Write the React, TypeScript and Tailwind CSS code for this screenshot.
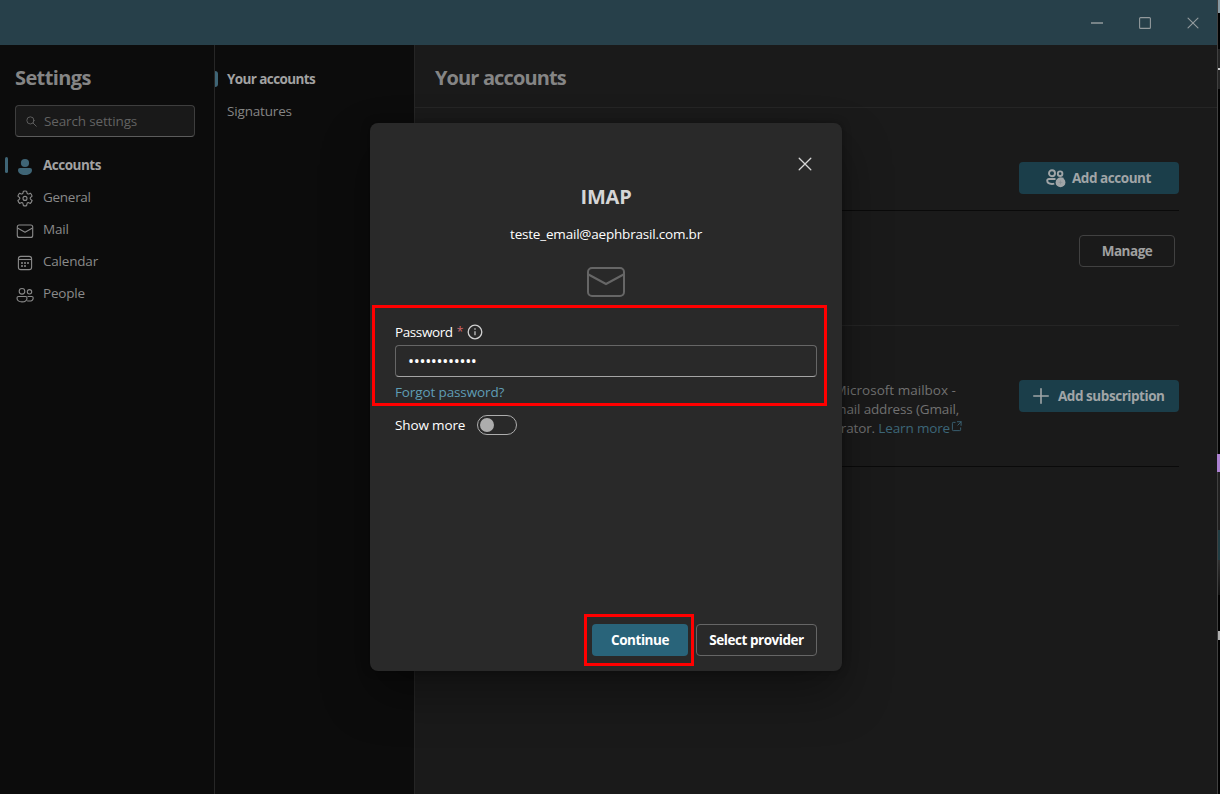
import React from 'react';

type IconProps = { className?: string };

function SearchIcon({ className }: IconProps) {
  return (
    <svg className={className} viewBox="0 0 12 12" fill="none" stroke="currentColor" strokeWidth="1" strokeLinecap="round">
      <circle cx="4.8" cy="4.8" r="3.9" />
      <path d="M7.7 7.7 11.2 11.2" />
    </svg>
  );
}

function PersonIcon({ className }: IconProps) {
  return (
    <svg className={className} viewBox="0 0 20 20" fill="currentColor">
      <circle cx="10" cy="6" r="4.1" />
      <path d="M5 11h10a2 2 0 0 1 2 2c0 3.3-3 5-7 5s-7-1.700-7-5a2 2 0 0 1 2-2Z" />
    </svg>
  );
}

function GearIcon({ className }: IconProps) {
  return (
    <svg className={className} viewBox="0 0 20 20" fill="none" stroke="currentColor" strokeWidth="1.1" strokeLinejoin="round">
      <path d="M8.400 2.200a8 8 0 0 1 3.200 0l.4 1.700a1.300 1.300 0 0 0 1.800 1l1.600-.7a8 8 0 0 1 1.700 2.900l-1.400 1.200a1.300 1.300 0 0 0 0 2.100l1.400 1.100a8 8 0 0 1-1.700 2.900l-1.600-.7a1.300 1.300 0 0 0-1.800 1l-.4 2a8 8 0 0 1-3.200 0L8 14.700a1.300 1.300 0 0 0-1.800-1l-1.600.7a8 8 0 0 1-1.700-2.900l1.400-1.100a1.300 1.300 0 0 0 0-2.100L2.900 7.100a8 8 0 0 1 1.700-2.900l1.600.7a1.300 1.300 0 0 0 1.800-1Z" />
      <circle cx="10" cy="9.400" r="2" />
    </svg>
  );
}

function MailIcon({ className }: IconProps) {
  return (
    <svg className={className} viewBox="0 0 20 20" fill="none" stroke="currentColor" strokeWidth="1.1" strokeLinejoin="round">
      <rect x="2.300" y="4" width="15.400" height="12.400" rx="2" />
      <path d="M2.500 7 10 11.200 17.500 7" />
    </svg>
  );
}

function CalendarIcon({ className }: IconProps) {
  return (
    <svg className={className} viewBox="0 0 20 20" fill="none" stroke="currentColor" strokeWidth="1.1">
      <rect x="3.400" y="3.400" width="13.200" height="13.200" rx="2.400" />
      <path d="M3.400 6.500h13.200" />
      <g fill="currentColor" stroke="none">
        <circle cx="7" cy="10" r="1" />
        <circle cx="10" cy="10" r="1" />
        <circle cx="13" cy="10" r="1" />
        <circle cx="7" cy="13" r="1" />
        <circle cx="10" cy="13" r="1" />
      </g>
    </svg>
  );
}

function PeopleIcon({ className }: IconProps) {
  return (
    <svg className={className} viewBox="0 0 20 20" fill="none" stroke="currentColor" strokeWidth="1.1" strokeLinejoin="round">
      <circle cx="7" cy="6.300" r="2.800" />
      <circle cx="14.500" cy="6.800" r="2.200" />
      <path d="M3.500 11.500h7a1.500 1.500 0 0 1 1.500 1.500c0 2.500-2 3.900-5 3.900S2 15.500 2 13a1.500 1.500 0 0 1 1.500-1.500Z" />
      <path d="M12.600 11.500h4.200c.9 0 1.400.6 1.400 1.400 0 2-1.600 3.100-4 3.100-.8 0-1.500-.1-2-.3" />
    </svg>
  );
}

function PeopleAddIcon({ className }: IconProps) {
  return (
    <svg className={className} viewBox="0 0 20 20" fill="none" stroke="currentColor" strokeWidth="1.900" strokeLinejoin="round">
      <circle cx="6" cy="5.300" r="3" />
      <circle cx="14.100" cy="5.700" r="2.300" />
      <path d="M9.500 11h-6.600c-.9 0-1.700.6-1.700 1.600 0 2 2 3.400 4.800 3.400.8 0 1.600-.1 2.300-.3" />
      <path d="M13.500 10.600h4" />
      <circle cx="14.500" cy="14.400" r="4.900" fill="currentColor" stroke="none" />
      <path d="M12.600 14.400h3.800M14.500 12.500v3.800" stroke="#868f93" strokeWidth=".7" />
    </svg>
  );
}

function CrossIcon({ className }: IconProps) {
  return (
    <svg className={className} viewBox="0 0 14 14" fill="none" stroke="currentColor" strokeWidth="1.300" strokeLinecap="round">
      <path d="M1.200 1.200 12.800 12.800M12.800 1.200 1.200 12.800" />
    </svg>
  );
}

function ExternalIcon({ className }: IconProps) {
  return (
    <svg className={className} viewBox="0 0 12 12" fill="none" stroke="currentColor" strokeWidth="1" strokeLinecap="round" strokeLinejoin="round">
      <path d="M4.500 1.500H2.500a1 1 0 0 0-1 1v7a1 1 0 0 0 1 1h7a1 1 0 0 0 1-1V7.500M7 .8h4v4M11 .8 7.500 4.500" />
    </svg>
  );
}

const navItems = [
  { label: 'General', Icon: GearIcon, cls: 'tracking-[-0.28px]' },
  { label: 'Mail', Icon: MailIcon, cls: 'tracking-[-0.2px]' },
  { label: 'Calendar', Icon: CalendarIcon, cls: 'tracking-[-0.2px]' },
  { label: 'People', Icon: PeopleIcon, cls: 'tracking-[-0.2px]' },
];

function TitleBar() {
  return (
    <header className="flex h-[45px] shrink-0 items-center justify-end bg-[#27404a] pr-[18px] text-[#939a9d]">
      <svg className="h-3 w-3" viewBox="0 0 12 12">
        <path d="M0 6h12" stroke="currentColor" strokeWidth="1.500" />
      </svg>
      <svg className="ml-9 h-3 w-3" viewBox="0 0 12 12" fill="none" stroke="currentColor">
        <rect x=".6" y=".6" width="10.800" height="10.800" rx="1" strokeWidth="1.100" />
      </svg>
      <CrossIcon className="ml-[36px] h-3 w-3" />
    </header>
  );
}

function Sidebar() {
  return (
    <aside className="w-[215px] shrink-0 border-r border-[#272727] bg-[#0c0c0c] text-[#8a8a8a]">
      <h1 className="mt-[19px] ml-[15px] text-[20px] leading-[28px] font-bold tracking-[-0.62px] text-[#858585]">Settings</h1>
      <div className="mt-[13px] ml-[15px] flex h-8 w-[180px] items-center rounded border border-[#3e3e3e] border-b-[#5c5c5c] bg-[#191919] pl-[10px] text-[#626262]">
        <SearchIcon className="h-[11px] w-[11px]" />
        <span className="ml-[7px] text-[13.5px] tracking-[-0.15px]">Search settings</span>
      </div>
      <nav className="mt-3">
        <div className="flex h-8 items-center pl-[5px]">
          <span className="h-4 w-[3px] rounded-sm bg-[#3f6576]" />
          <PersonIcon className="mt-1 ml-[7px] h-5 w-5 text-[#3f6576]" />
          <span className="ml-2 text-[13.5px] font-bold tracking-[-0.5px] text-[#a2a2a2]">Accounts</span>
        </div>
        {navItems.map(({ label, Icon, cls }) => (
          <div key={label} className="flex h-8 items-center pl-[15px]">
            <Icon className="mt-[3px] h-5 w-5" />
            <span className={`ml-2 text-[13.5px] ${cls}`}>{label}</span>
          </div>
        ))}
      </nav>
    </aside>
  );
}

function SubNav() {
  return (
    <nav className="w-[200px] shrink-0 border-r border-[#252525] bg-[#0c0c0c] pt-[18px] text-[13.5px]">
      <div className="flex h-8 items-center">
        <span className="h-4 w-[3px] rounded-r-sm bg-[#3f6576]" />
        <span className="ml-[9px] font-bold tracking-[-0.6px] text-[#a2a2a2]">Your accounts</span>
      </div>
      <div className="flex h-8 items-center pl-3 tracking-[-0.17px] text-[#858585]">Signatures</div>
    </nav>
  );
}

function AccountsPanel() {
  return (
    <main className="min-w-0 flex-1 bg-[#1a1a1a]">
      <div className="flex h-[63px] items-center border-b border-[#252525] pl-5">
        <h2 className="mt-[4px] text-[20px] font-bold tracking-[-0.88px] text-[#858585]">Your accounts</h2>
      </div>
      <div className="mr-[38px] ml-5 flex h-[103px] justify-end border-b border-[#0a0a0a] pt-[54px]">
        <div className="flex h-8 w-40 items-center rounded bg-[#1b3e4a] pl-[27px] text-[#a0a5a7]">
          <PeopleAddIcon className="h-5 w-5" />
          <span className="ml-[6px] text-[13.5px] font-bold tracking-[-0.45px]">Add account</span>
        </div>
      </div>
      <div className="mr-[38px] ml-5 flex h-[115px] justify-end border-b border-[#252525] pt-6 pr-1">
        <div className="flex h-8 w-24 items-center justify-center rounded border border-[#414141] text-[13.5px] font-bold tracking-[-0.5px] text-[#a0a0a0]">
          Manage
        </div>
      </div>
      <div className="mr-[38px] ml-5 flex h-[141px] justify-end border-b border-[#0a0a0a] pt-[54px]">
        <div className="mr-[57px] pt-px text-right text-[13.5px] leading-[19px] whitespace-nowrap text-[#717171]">
          <p className="pr-[6px] tracking-[0.02px]">Microsoft mailbox -</p>
          <p className="pr-[3px] tracking-[-0.15px]">email address (Gmail,</p>
          <p className="flex items-center justify-end tracking-[-0.15px]">
            administrator.&nbsp;<span className="text-[#3c6678]">Learn more</span>
            <ExternalIcon className="mb-1 ml-px h-[11px] w-[11px] text-[#3c6678]" />
          </p>
        </div>
        <div className="flex h-8 w-40 items-center rounded bg-[#1b3e4a] pl-[14px] text-[#a0a5a7]">
          <svg className="h-4 w-4" viewBox="0 0 16 16" stroke="currentColor" strokeWidth="1.600" strokeLinecap="round">
            <path d="M8 .8v14.400M.8 8h14.400" />
          </svg>
          <span className="ml-[9px] text-[13.5px] font-bold tracking-[-0.45px]">Add subscription</span>
        </div>
      </div>
    </main>
  );
}

function EdgeStrip() {
  return (
    <div className="flex w-[3px] shrink-0 flex-col border-l border-[#414141] bg-[#020202]">
      <div className="h-[13px] bg-[#8799a2]" />
      <div className="mt-9 flex h-10 items-center bg-[#242424]">
        <span className="h-[2px] w-full bg-[#d0d0d0]" />
      </div>
      <div className="mt-[365px] -ml-px h-[18px] bg-[#ad82d2]" />
      <div className="h-[58px] bg-[#202020]" />
      <div className="h-[30px] bg-[#213d43]" />
      <div className="h-[35px] bg-linear-to-b from-[#303030] to-[#111111]" />
      <div className="mt-[36px] h-[9px] bg-[#b0b0b0]" />
    </div>
  );
}

function ImapDialog() {
  return (
    <section
      role="dialog"
      className="absolute top-[123px] left-[370px] flex h-[548px] w-[472px] flex-col rounded-lg bg-[#292929] px-[25px] text-[13.5px] text-white shadow-[0_0_8px_rgba(0,0,0,0.35),0_24px_48px_rgba(0,0,0,0.35)]"
    >
      <div className="mt-[34px] flex justify-end pr-[5px]">
        <CrossIcon className="h-[14px] w-[14px] text-[#d6d6d6]" />
      </div>
      <h2 className="mt-[12px] text-center text-[20px] leading-[28px] font-bold tracking-[-0.2px] text-[#d6d6d6]">IMAP</h2>
      <p className="mt-[13px] text-center leading-5 tracking-[-0.2px]">teste_email@aephbrasil.com.br</p>
      <svg className="mx-auto mt-[23px] h-[30px] w-[38px] shrink-0" viewBox="0 0 38 30" fill="none" stroke="#666666" strokeWidth="2">
        <rect x="1" y="1" width="36" height="28" rx="4" />
        <path d="M1.500 7.500 19 17 36.500 7.500" />
      </svg>
      <div className="mt-[25px] flex h-5 items-center">
        <span className="tracking-[-0.4px]">Password</span>
        <span className="ml-[4px] w-[6px] text-[12px] text-[#d0686c]">*</span>
        <svg className="ml-[4px] h-4 w-4" viewBox="0 0 16 16" fill="none" stroke="#d0d0d0">
          <circle cx="8" cy="8" r="6.800" strokeWidth="1.300" />
          <path d="M8 7.300v4" strokeWidth="1.200" />
          <circle cx="8" cy="5" r=".8" fill="#d0d0d0" stroke="none" />
        </svg>
      </div>
      <div className="mt-[3px] flex h-8 items-center rounded border border-[#666666] border-b-[#a5a5a5] pl-3">
        <span className="text-[16px] tracking-[-0.3px]">••••••••••••</span>
      </div>
      <a className="mt-[5px] leading-5 tracking-[-0.12px] text-[#5f9db5]">Forgot password?</a>
      <div className="mt-[13px] flex h-5 items-center">
        <span className="w-[70px] whitespace-nowrap tracking-[-0.13px]">Show more</span>
        <span className="ml-3 flex h-5 w-10 items-center rounded-full border border-[#adadad] pl-[2px]">
          <span className="h-[14px] w-[14px] rounded-full bg-[#adadad]" />
        </span>
      </div>
      <div className="mt-auto mb-[15px] flex justify-end gap-2 font-bold">
        <button className="h-8 w-24 rounded bg-[#29647a] tracking-[-0.45px]">Continue</button>
        <button className="h-8 w-[121px] rounded border border-[#666666] tracking-[-0.45px]">Select provider</button>
      </div>
      <div className="pointer-events-none absolute top-[182px] left-[2px] h-[101px] w-[455px] border-3 border-[#ff0000]" />
      <div className="pointer-events-none absolute top-[491px] left-[214px] h-[52px] w-[110px] border-3 border-[#ff0000]" />
    </section>
  );
}

export default function App() {
  return (
    <div className="relative flex h-[794px] w-[1220px] overflow-hidden bg-[#1a1a1a] font-['Open_Sans','Noto_Sans',sans-serif] antialiased">
      <div className="flex min-w-0 flex-1 flex-col">
        <TitleBar />
        <div className="flex flex-1">
          <Sidebar />
          <SubNav />
          <AccountsPanel />
        </div>
      </div>
      <EdgeStrip />
      <ImapDialog />
    </div>
  );
}
